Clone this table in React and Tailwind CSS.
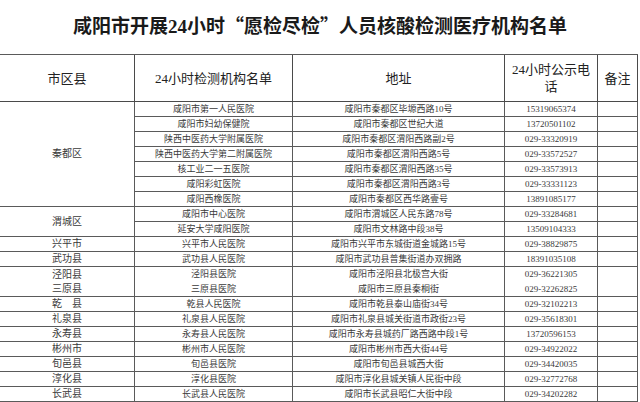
import React from 'react'

// 每个市区县一组，rows: [机构, 地址, 电话]
const groups = [
    {
        area: '秦都区',
        rows: [
            ['咸阳市第一人民医院', '咸阳市秦都区毕塬西路10号', '15319065374'],
            ['咸阳市妇幼保健院', '咸阳市秦都区世纪大道', '13720501102'],
            ['陕西中医药大学附属医院', '咸阳市秦都区渭阳西路副2号', '029-33320919'],
            ['陕西中医药大学第二附属医院', '咸阳市秦都区渭阳西路5号', '029-33572527'],
            ['核工业二一五医院', '咸阳市秦都区渭阳西路35号', '029-33573913'],
            ['咸阳彩虹医院', '咸阳市秦都区渭阳西路3号', '029-33331123'],
            ['咸阳西橡医院', '咸阳市秦都区西华路壹号', '13891085177'],
        ],
    },
    {
        area: '渭城区',
        rows: [
            ['咸阳市中心医院', '咸阳市渭城区人民东路78号', '029-33284681'],
            ['延安大学咸阳医院', '咸阳市文林路中段38号', '13509104333'],
        ],
    },
    { area: '兴平市', rows: [['兴平市人民医院', '咸阳市兴平市东城街道金城路15号', '029-38829875']] },
    { area: '武功县', rows: [['武功县人民医院', '咸阳市武功县普集街道办双拥路', '18391035108']] },
    { area: '泾阳县', open: true, rows: [['泾阳县医院', '咸阳市泾阳县北极宫大街', '029-36221305']] },
    { area: '三原县', rows: [['三原县医院', '咸阳市三原县秦桐街', '029-32262825']] },
    { area: '乾　县', rows: [['乾县人民医院', '咸阳市乾县泰山庙街34号', '029-32102213']] },
    { area: '礼泉县', rows: [['礼泉县人民医院', '咸阳市礼泉县城关街道市政街23号', '029-35618301']] },
    { area: '永寿县', rows: [['永寿县人民医院', '咸阳市永寿县城药厂路西路中段1号', '13720596153']] },
    { area: '彬州市', rows: [['彬州市人民医院', '咸阳市彬州市西大街44号', '029-34922022']] },
    { area: '旬邑县', rows: [['旬邑县医院', '咸阳市旬邑县城西大街', '029-34420035']] },
    { area: '淳化县', rows: [['淳化县医院', '咸阳市淳化县城关镇人民街中段', '029-32772768']] },
    { area: '长武县', rows: [['长武县人民医院', '咸阳市长武县昭仁大街中段', '029-34202282']] },
]

const spans = {
    1: 'row-span-1',
    2: 'row-span-2',
    7: 'row-span-7',
}

const Cell = ({ children, open, span = 1 }) => (
    <div
        className={`${spans[span]} flex items-center justify-center border-r border-[#5a5a5a] text-[9px] leading-none text-[#3a3a3a] whitespace-nowrap ${open ? 'border-b-0' : 'border-b'}`}>
        {children}
    </div>
)

const Head = ({ children }) => (
    <div className="flex items-center justify-center border-r border-b border-[#4a4a4a] text-center text-[13px] leading-[17px] text-[#222]">
        {children}
    </div>
)

// 标题里的引号用全角字形
const Q = ({ children }) => (
    <span className="inline-block w-[19px] text-center font-['Noto_Sans_CJK_SC',sans-serif]">{children}</span>
)

export default function App() {
    return (
        <div
            className="w-[640px] h-[402px] overflow-hidden bg-white"
            style={{ fontFamily: '"Liberation Serif", "Noto Sans CJK SC", serif' }}>
            <div className="h-[54px] flex items-center justify-center pb-0.5">
                <h1 className="text-[19px] font-bold text-[#1a1a1a]">
                    咸阳市开展24小时<Q>“</Q>愿检尽检<Q>”</Q>人员核酸检测医疗机构名单
                </h1>
            </div>

            <div className="w-[638px] grid grid-cols-[135px_158px_212px_93px_40px] grid-rows-[47px_repeat(20,15px)] border-t border-[#5a5a5a]">
                <Head>市区县</Head>
                <Head>24小时检测机构名单</Head>
                <Head>地址</Head>
                <Head>24小时公示电<br />话</Head>
                <Head>备注</Head>

                {groups.map((g) => (
                    <React.Fragment key={g.area}>
                        <Cell span={g.rows.length} open={g.open}>
                            <span className="text-[10px]">{g.area}</span>
                        </Cell>
                        {g.rows.map(([name, addr, tel]) => (
                            <React.Fragment key={name}>
                                <Cell open={g.open}>{name}</Cell>
                                <Cell open={g.open}>{addr}</Cell>
                                <Cell open={g.open}>{tel}</Cell>
                                <Cell open={g.open}></Cell>
                            </React.Fragment>
                        ))}
                    </React.Fragment>
                ))}
            </div>
        </div>
    )
}
